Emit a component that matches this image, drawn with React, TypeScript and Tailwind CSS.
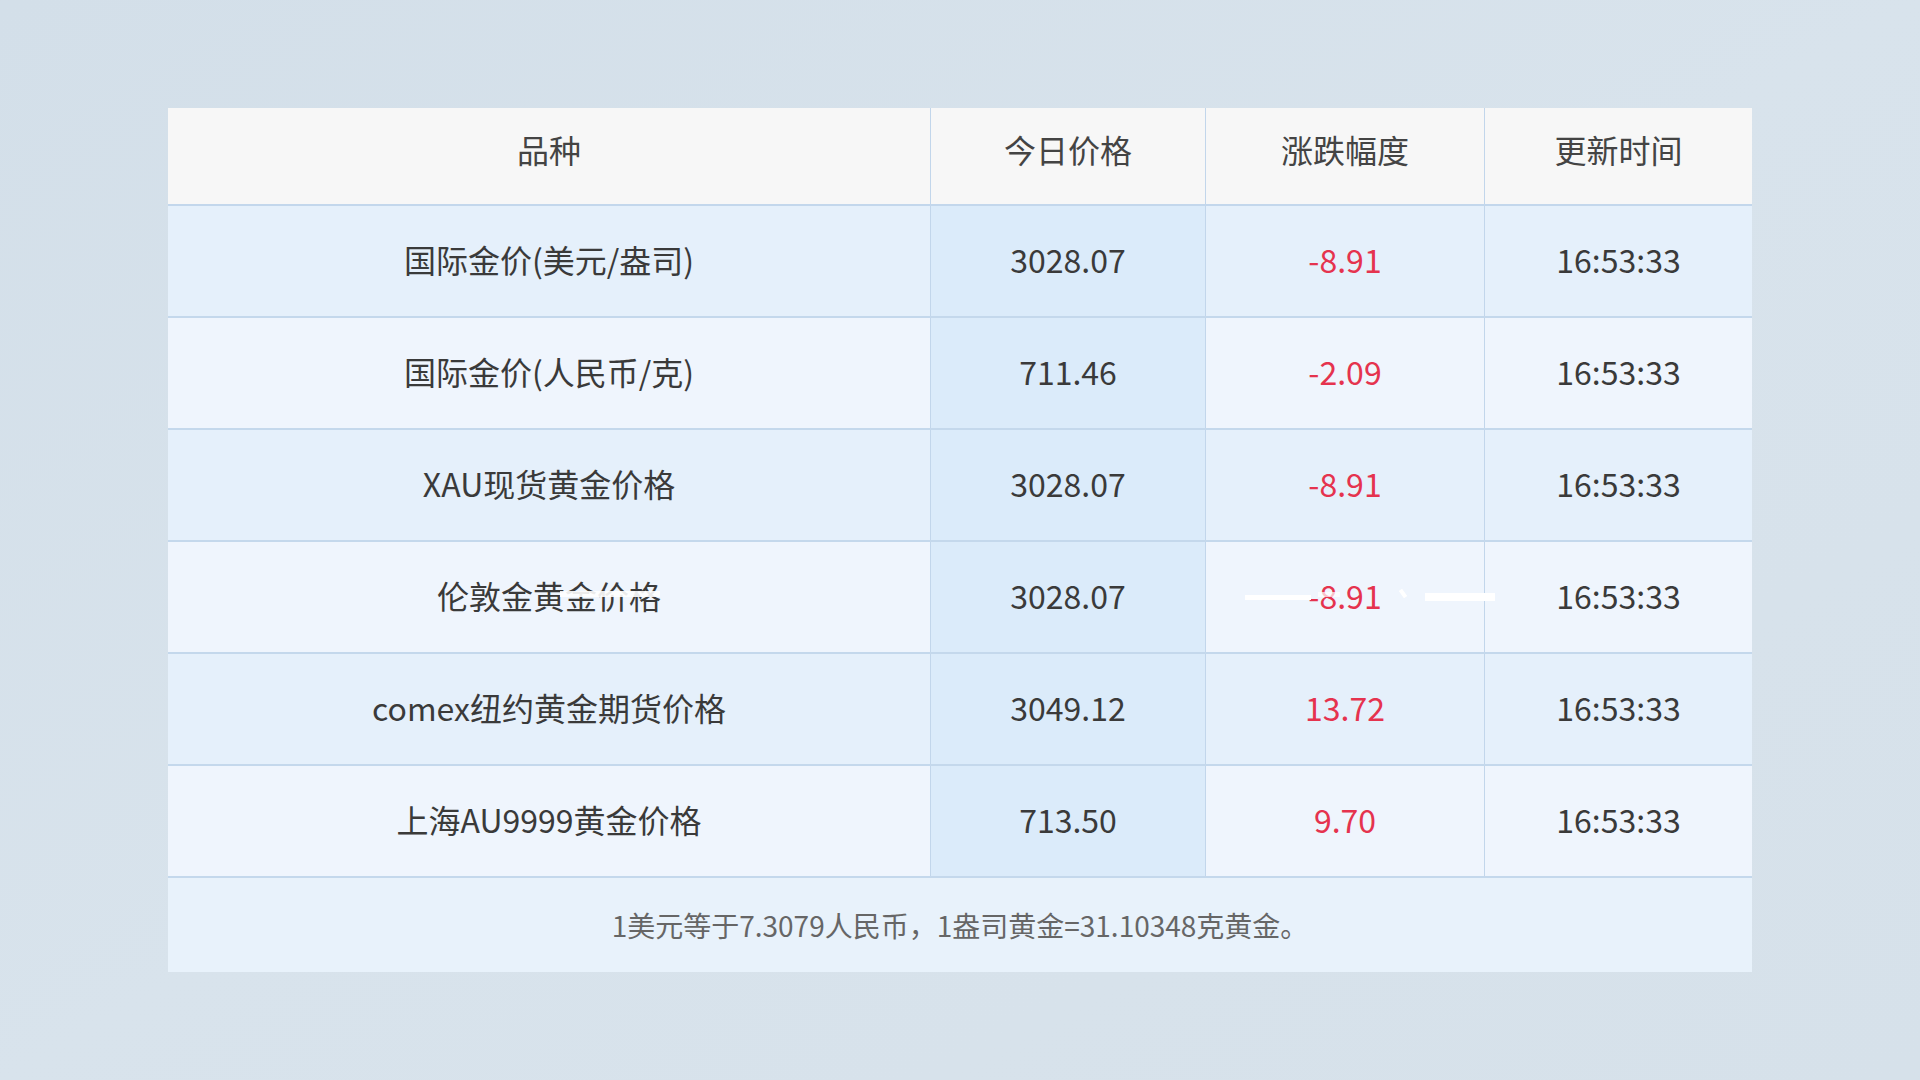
import React from "react";

type Row = {
  name: string;
  price: string;
  change: string;
  time: string;
};

const rows: Row[] = [
  { name: "国际金价(美元/盎司)", price: "3028.07", change: "-8.91", time: "16:53:33" },
  { name: "国际金价(人民币/克)", price: "711.46", change: "-2.09", time: "16:53:33" },
  { name: "XAU现货黄金价格", price: "3028.07", change: "-8.91", time: "16:53:33" },
  { name: "伦敦金黄金价格", price: "3028.07", change: "-8.91", time: "16:53:33" },
  { name: "comex纽约黄金期货价格", price: "3049.12", change: "13.72", time: "16:53:33" },
  { name: "上海AU9999黄金价格", price: "713.50", change: "9.70", time: "16:53:33" },
];

const font = { fontFamily: '"Microsoft YaHei", "Noto Sans CJK SC", "Noto Sans", sans-serif' };

export default function App() {
  return (
    <div
      className="w-[1920px] h-[1080px] bg-gradient-to-br from-[#d3dfe9] via-[#d8e3ec] to-[#d6e1ea] pt-[108px] pl-[168px]"
      style={font}
    >
      <div className="w-[1584px] flex flex-col">
        {/* header */}
        <div className="grid grid-cols-[763px_275px_279px_267px] h-[98px] bg-[#f7f7f7] border-b-2 border-[#c3d7ec] text-[32px] text-[#444]">
          <div className="flex items-center justify-center border-r border-[#c2d6eb] pb-[14px]">品种</div>
          <div className="flex items-center justify-center border-r border-[#c2d6eb] pb-[14px]">今日价格</div>
          <div className="flex items-center justify-center border-r border-[#c2d6eb] pb-[14px]">涨跌幅度</div>
          <div className="flex items-center justify-center pb-[14px]">更新时间</div>
        </div>

        {rows.map((r, i) => (
          <div
            key={i}
            className={
              "relative grid grid-cols-[763px_275px_279px_267px] h-[112px] border-b-2 border-[#c4d8ec] text-[32px] text-[#3a3a3a] " +
              (i % 2 === 0 ? "bg-[#e5f0fb]" : "bg-[#eff5fd]")
            }
          >
            <div className="flex items-center justify-center border-r border-[#c2d6eb] pb-[4px]">{r.name}</div>
            <div className="flex items-center justify-center border-r border-[#c2d6eb] bg-[#dbebfa] pb-[4px]">{r.price}</div>
            <div className="flex items-center justify-center border-r border-[#c2d6eb] text-[#e5334e] pb-[4px]">{r.change}</div>
            <div className="flex items-center justify-center pb-[4px]">{r.time}</div>

            {i === 3 && (
              <>
                <div className="absolute left-[392px] top-[49px] w-[100px] h-[6px] bg-white/90" />
                <div className="absolute left-[1077px] top-[53px] w-[66px] h-[5px] bg-white" />
                <div className="absolute left-[1150px] top-[50px] w-[22px] h-[5px] bg-white/70" />
                <div className="absolute left-[1233px] top-[47px] w-[4px] h-[9px] bg-white rotate-[-35deg]" />
                <div className="absolute left-[1257px] top-[51px] w-[70px] h-[8px] bg-white" />
              </>
            )}
          </div>
        ))}

        {/* footer */}
        <div className="h-[94px] bg-[#e8f2fb] flex items-center justify-center text-[28px] text-[#666]">
          1美元等于7.3079人民币，1盎司黄金=31.10348克黄金。
        </div>
      </div>
    </div>
  );
}
